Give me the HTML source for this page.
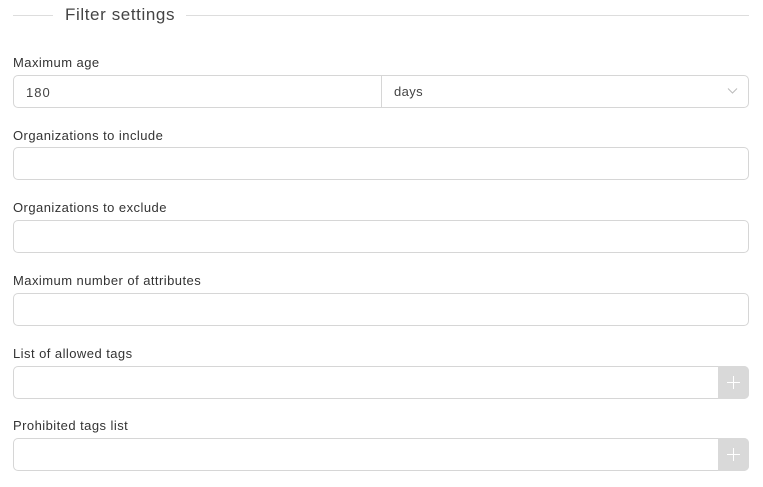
<!DOCTYPE html>
<html><head><meta charset="utf-8"><style>
*{box-sizing:border-box;margin:0;padding:0}
body{width:763px;height:487px;background:#fff;font-family:"Liberation Sans",sans-serif;color:#333;position:relative;overflow:hidden}
.leg{position:absolute;top:5px;left:65px;font-size:17px;color:#444;letter-spacing:0.6px}
.ln{position:absolute;top:15px;height:1px;background:#ddd}
.lab{position:absolute;left:13px;font-size:13px;color:#333;letter-spacing:0.45px}
.in{position:absolute;left:13px;width:736px;height:33px;border:1px solid #d6d6d6;border-radius:5px;background:#fff}
.add{position:absolute;right:-1px;top:-1px;width:31px;height:33px;background:#d9d9d9;border-radius:0 5px 5px 0}
.add:before{content:"";position:absolute;left:9px;top:16px;width:13px;height:1px;background:#fff}
.add:after{content:"";position:absolute;left:15px;top:10px;width:1px;height:13px;background:#fff}
</style></head><body>
<div class="ln" style="left:13px;width:40px"></div>
<div class="leg">Filter settings</div>
<div class="ln" style="left:186px;width:563px"></div>

<div class="lab" style="top:55px">Maximum age</div>
<div class="in" style="top:75px">
<span style="position:absolute;left:12px;top:9px;font-size:13px;color:#444;letter-spacing:1px">180</span>
<div style="position:absolute;left:367px;top:0;bottom:0;width:1px;background:#d6d6d6"></div>
<span style="position:absolute;left:380px;top:8px;font-size:13px;color:#444;letter-spacing:0.4px">days</span>
<svg style="position:absolute;right:10px;top:11px" width="11" height="8" viewBox="0 0 11 8"><path d="M1 1.5L5.5 6 10 1.5" fill="none" stroke="#bbb" stroke-width="1"/></svg>
</div>

<div class="lab" style="top:128px">Organizations to include</div>
<div class="in" style="top:147px"></div>
<div class="lab" style="top:200px">Organizations to exclude</div>
<div class="in" style="top:220px"></div>
<div class="lab" style="top:273px">Maximum number of attributes</div>
<div class="in" style="top:293px"></div>
<div class="lab" style="top:346px">List of allowed tags</div>
<div class="in" style="top:366px"><div class="add"></div></div>
<div class="lab" style="top:418px">Prohibited tags list</div>
<div class="in" style="top:438px"><div class="add"></div></div>
</body></html>
